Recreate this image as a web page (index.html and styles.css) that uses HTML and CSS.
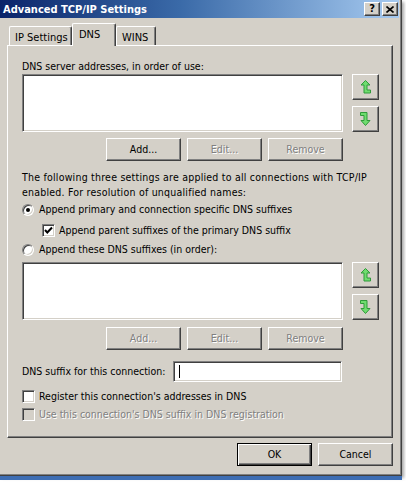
FILE: index.html
```html
<!DOCTYPE html>
<html>
<head>
<meta charset="utf-8">
<title>Advanced TCP/IP Settings</title>
<link rel="stylesheet" href="styles.css">
</head>
<body>
<div class="window">
  <div class="titlebar">
    <span class="title">Advanced TCP/IP Settings</span>
    <div class="caption-btns">
      <span class="cap-btn help">?</span>
      <span class="cap-btn"><svg width="8" height="7" viewBox="0 0 8 7"><path d="M0.5 0.5 L7.5 6.5 M7.5 0.5 L0.5 6.5" stroke="#000" stroke-width="1.6" fill="none"/></svg></span>
    </div>
  </div>

  <div class="tabs">
    <div class="tab tab-ip">IP Settings</div>
    <div class="tab tab-dns active">DNS</div>
    <div class="tab tab-wins">WINS</div>
  </div>

  <div class="panel">
    <div class="label first">DNS server addresses, in order of use:</div>
    <div class="listrow">
      <div class="listbox"></div>
      <div class="movers">
        <div class="btn mover">
          <svg width="11" height="14" viewBox="0 0 11 14"><path d="M5.5 0.5 L10 5 L7 5 L7 10 L10.5 10 L10.5 13 L4 13 L4 5 L1 5 Z" fill="#6fdc6f" stroke="#2f9a3a" stroke-width="1"/></svg>
        </div>
        <div class="btn mover">
          <svg width="11" height="14" viewBox="0 0 11 14"><path d="M0.5 0.5 L7 0.5 L7 8.5 L10 8.5 L5.5 13.5 L1 8.5 L4 8.5 L4 3.5 L0.5 3.5 Z" fill="#6fdc6f" stroke="#2f9a3a" stroke-width="1"/></svg>
        </div>
      </div>
    </div>
    <div class="btnrow">
      <div class="btn">Add...</div>
      <div class="btn disabled">Edit...</div>
      <div class="btn disabled">Remove</div>
    </div>

    <p class="note">The following three settings are applied to all connections with TCP/IP<br>enabled. For resolution of unqualified names:</p>

    <div class="opt opt-r1"><span class="radio on"></span><span>Append primary and connection specific DNS suffixes</span></div>
    <div class="opt opt-cb1 indent"><span class="check"><svg width="9" height="9" viewBox="0 0 9 9"><path d="M1 4 L3.3 6.5 L8 1.5" stroke="#000" stroke-width="2" fill="none"/></svg></span><span>Append parent suffixes of the primary DNS suffix</span></div>
    <div class="opt opt-r2"><span class="radio"></span><span>Append these DNS suffixes (in order):</span></div>

    <div class="listrow second">
      <div class="listbox"></div>
      <div class="movers">
        <div class="btn mover">
          <svg width="11" height="14" viewBox="0 0 11 14"><path d="M5.5 0.5 L10 5 L7 5 L7 10 L10.5 10 L10.5 13 L4 13 L4 5 L1 5 Z" fill="#6fdc6f" stroke="#2f9a3a" stroke-width="1"/></svg>
        </div>
        <div class="btn mover">
          <svg width="11" height="14" viewBox="0 0 11 14"><path d="M0.5 0.5 L7 0.5 L7 8.5 L10 8.5 L5.5 13.5 L1 8.5 L4 8.5 L4 3.5 L0.5 3.5 Z" fill="#6fdc6f" stroke="#2f9a3a" stroke-width="1"/></svg>
        </div>
      </div>
    </div>
    <div class="btnrow second">
      <div class="btn disabled">Add...</div>
      <div class="btn disabled">Edit...</div>
      <div class="btn disabled">Remove</div>
    </div>

    <div class="suffix">
      <span class="suffix-label">DNS suffix for this connection:</span>
      <div class="textbox"><span class="caret"></span></div>
    </div>

    <div class="opt opt-cb2"><span class="check"></span><span>Register this connection's addresses in DNS</span></div>
    <div class="opt opt-cb3 disabled-text"><span class="check off"></span><span>Use this connection's DNS suffix in DNS registration</span></div>
  </div>

  <div class="footer">
    <div class="btn default">OK</div>
    <div class="btn">Cancel</div>
  </div>
</div>
</body>
</html>
```

FILE: styles.css
```css
html, body {
  margin: 0;
  padding: 0;
}
body {
  width: 406px;
  height: 484px;
  overflow: hidden;
  background: #ffffff;
  font-family: Tahoma, "DejaVu Sans Condensed", "Liberation Sans", sans-serif;
  font-size: 10.5px;
  color: #000;
}
.window {
  width: 402px;
  height: 476px;
  box-sizing: border-box;
  background: #d4d0c8;
  border-right: 1px solid #404040;
  border-bottom: 1px solid #404040;
  box-shadow: inset -1px -1px #808080, 0 4px 0 #3d6db3, 2px 2px 3px rgba(0,0,0,0.35);
  display: flex;
  flex-direction: column;
}
.titlebar {
  height: 18px;
  margin-right: 2px;
  display: flex;
  align-items: center;
  background: linear-gradient(90deg, #0a246a 0%, #3a6aa8 45%, #a6caf0 100%);
  padding-left: 3px;
}
.title {
  color: #fff;
  font-weight: bold;
  font-size: 11px;
  white-space: nowrap;
}
.caption-btns {
  margin-left: auto;
  margin-right: 1px;
  display: flex;
  gap: 2px;
}
.cap-btn {
  width: 16px;
  height: 14px;
  box-sizing: border-box;
  background: #d4d0c8;
  border: 1px solid;
  border-color: #fff #404040 #404040 #fff;
  box-shadow: inset -1px -1px #808080;
  display: flex;
  align-items: center;
  justify-content: center;
  font-weight: bold;
  font-size: 11px;
  line-height: 12px;
}
.tabs {
  display: flex;
  align-items: flex-end;
  margin-top: 5px;
  padding-left: 9px;
}
.tab {
  box-sizing: border-box;
  height: 19px;
  padding: 4px 0 0 5px;
  line-height: 13px;
  border-top: 1px solid #fff;
  border-left: 1px solid #fff;
  border-right: 1px solid #404040;
  box-shadow: inset -1px 0 #808080;
  border-radius: 2px 2px 0 0;
  white-space: nowrap;
  background: #d4d0c8;
  font-size: 11px;
}
.tab-ip { width: 63px; }
.tab-dns { width: 44px; padding-left: 6px; }
.tab-wins { width: 40px; }
.tab.active {
  height: 23px;
  margin-bottom: -1px;
  position: relative;
  z-index: 1;
}
.panel {
  margin-left: 7px;
  width: 386px;
  height: 393px;
  box-sizing: border-box;
  border-top: 1px solid #fff;
  border-left: 1px solid #fff;
  border-right: 1px solid #404040;
  border-bottom: 1px solid #404040;
  box-shadow: inset -1px -1px #808080;
  padding: 14px 0 0 14px;
  display: flex;
  flex-direction: column;
  align-items: flex-start;
}
.label {
  line-height: 13px;
  white-space: nowrap;
}
.listrow {
  display: flex;
  margin-top: 1px;
}
.listrow.second {
  margin-top: 5px;
}
.listbox,
.textbox {
  box-sizing: border-box;
  background: #fff;
  border: 1px solid;
  border-color: #808080 #fff #fff #808080;
  box-shadow: inset 1px 1px #404040, inset -1px -1px #d4d0c8;
}
.listbox {
  width: 321px;
  height: 58px;
}
.movers {
  margin-left: 9px;
  display: flex;
  flex-direction: column;
  gap: 6px;
}
.btn {
  box-sizing: border-box;
  width: 75px;
  height: 23px;
  background: #d4d0c8;
  border: 1px solid;
  border-color: #fff #404040 #404040 #fff;
  box-shadow: inset -1px -1px #808080;
  display: flex;
  align-items: center;
  justify-content: center;
  line-height: 13px;
  white-space: nowrap;
}
.btn.mover {
  width: 27px;
  height: 26px;
}
.btn.disabled {
  color: #808080;
  text-shadow: 1px 1px 0 #fff;
}
.btn.default {
  border: 1px solid #000;
  box-shadow: inset 1px 1px #fff, inset -1px -1px #404040, inset -2px -2px #808080;
}
.btnrow {
  width: 321px;
  display: flex;
  justify-content: flex-end;
  gap: 6px;
  margin-top: 6px;
}
.btnrow.second {
  margin-top: 7px;
}
.note {
  margin: 9px 0 0 0;
  line-height: 15px;
  white-space: nowrap;
  letter-spacing: 0.22px;
}
.opt {
  display: flex;
  align-items: center;
  height: 15px;
  line-height: 15px;
  white-space: nowrap;
}
.opt-r1 { margin-top: 2px; }
.opt-cb1 { margin-top: 6px; }
.opt-r2 { margin-top: 4px; }
.opt-cb2 { margin-top: 7px; }
.opt-cb3 { margin-top: 3px; }
.indent { margin-left: 20px; }
.radio {
  width: 12px;
  height: 12px;
  box-sizing: border-box;
  border-radius: 50%;
  background: #fff;
  border: 1px solid;
  border-color: #808080 #fff #fff #808080;
  box-shadow: inset 1px 1px #404040, inset -1px -1px #d4d0c8;
  margin-right: 5px;
  display: flex;
  align-items: center;
  justify-content: center;
  flex: none;
}
.radio.on::after {
  content: "";
  width: 4px;
  height: 4px;
  border-radius: 50%;
  background: #000;
}
.check {
  width: 13px;
  height: 13px;
  box-sizing: border-box;
  background: #fff;
  border: 1px solid;
  border-color: #808080 #fff #fff #808080;
  box-shadow: inset 1px 1px #404040, inset -1px -1px #d4d0c8;
  margin-right: 4px;
  display: flex;
  align-items: center;
  justify-content: center;
  flex: none;
}
.check.off {
  background: #d4d0c8;
}
.disabled-text {
  color: #808080;
  text-shadow: 1px 1px 0 #fff;
}
.suffix {
  display: flex;
  align-items: center;
  margin-top: 11px;
}
.suffix-label {
  width: 151px;
  white-space: nowrap;
  line-height: 13px;
}
.textbox {
  width: 169px;
  height: 21px;
  padding: 3px 0 0 5px;
}
.caret {
  display: block;
  width: 1px;
  height: 13px;
  background: #000;
}
.footer {
  display: flex;
  justify-content: flex-end;
  gap: 6px;
  margin-top: 5px;
  width: 393px;
}
```
